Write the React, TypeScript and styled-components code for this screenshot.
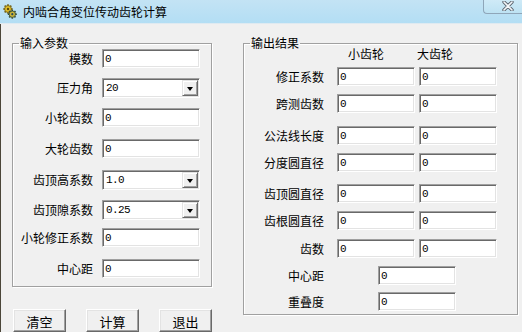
import React from 'react'
import styled, { createGlobalStyle } from 'styled-components'

const GlobalStyle = createGlobalStyle`
  html, body {
    margin: 0;
    padding: 0;
    background: #f0f0f0;
  }
  body {
    font-family: "Noto Sans CJK SC", "Liberation Sans", sans-serif;
    font-size: 12px;
    color: #000;
  }
`

const Window = styled.div`
  width: 522px;
  height: 332px;
  overflow: hidden;
  background: #f0f0f0;
`

const TitleBar = styled.div`
  height: 23px;
  display: flex;
  align-items: flex-start;
  background: linear-gradient(#c3e3f4, #b3def4);
  border-bottom: 1px solid #dfeaf1;
`

const AppIcon = styled.svg`
  margin: 4px 0 0 3px;
  flex: none;
`

const TitleText = styled.span`
  margin: 4px 0 0 6px;
  font-size: 12px;
  line-height: 15px;
  color: #000;
`

const CloseButton = styled.div`
  margin-left: auto;
  width: 39px;
  height: 14px;
  border-left: 1px solid #8fa6b9;
  border-bottom: 1px solid #8fa6b9;
  border-bottom-left-radius: 4px;
  background: linear-gradient(#cfeaf7, #bde2f3);
  display: flex;
  align-items: flex-start;
  padding: 1px 0 0 18px;
  box-sizing: border-box;
`

const Body = styled.div`
  display: flex;
  align-items: flex-start;
  padding: 13px 0 0 11px;
  border-left: 1px solid #4b4639;
  height: 308px;
  box-sizing: border-box;
`

const LeftColumn = styled.div`
  width: 200px;
  display: flex;
  flex-direction: column;
`

const Group = styled.fieldset<{ $width: number; $bottom: number }>`
  width: ${p => p.$width}px;
  box-sizing: border-box;
  margin: 0;
  padding: 0 0 ${p => p.$bottom}px 0;
  border: 1px solid #a0a0a0;
  box-shadow: 1px 1px 0 #fff, inset 1px 1px 0 #fff;
  min-width: 0;
`

const Legend = styled.legend`
  margin-left: 6px;
  padding: 0 1px;
  font-size: 12px;
  line-height: 12px;
`

const Row = styled.div<{ $cols: string; $mt: number; $gap?: number }>`
  display: grid;
  grid-template-columns: ${p => p.$cols};
  column-gap: ${p => p.$gap ?? 9}px;
  align-items: center;
  margin-top: ${p => p.$mt}px;
`

const Label = styled.span`
  text-align: right;
  white-space: nowrap;
  font-size: 12px;
  line-height: 14px;
`

const Header = styled.span<{ $pad: number }>`
  padding-left: ${p => p.$pad}px;
  font-size: 12px;
  line-height: 14px;
`

const sunken = `
  box-sizing: border-box;
  border: 1px solid;
  border-color: #a0a0a0 #fff #fff #a0a0a0;
  box-shadow: inset 1px 1px 0 #696969, inset -1px -1px 0 #e3e3e3;
  background: #fff;
`

const TextBox = styled.input<{ $shift?: number }>`
  ${sunken}
  width: 100%;
  height: 19px;
  margin: 0 0 0 ${p => p.$shift ?? 0}px;
  padding: 0 0 0 2px;
  font-family: "Liberation Mono", monospace;
  font-size: 11px;
  letter-spacing: -0.6px;
  color: #000;
  outline: none;
`

const Combo = styled.div`
  ${sunken}
  height: 20px;
  display: flex;
  align-items: center;
  padding: 2px 2px 2px 3px;
  font-family: "Liberation Mono", monospace;
  font-size: 11px;
  letter-spacing: -0.6px;
`

const ComboText = styled.span`
  flex: 1;
`

const DropButton = styled.div`
  width: 16px;
  height: 16px;
  box-sizing: border-box;
  border: 1px solid;
  border-color: #e3e3e3 #696969 #696969 #e3e3e3;
  box-shadow: inset 1px 1px 0 #fff, inset -1px -1px 0 #a0a0a0;
  background: #f0f0f0;
  display: flex;
  justify-content: center;
  align-items: center;
  margin-right: -1px;
`

const Arrow = styled.div`
  width: 0;
  height: 0;
  border-left: 3.5px solid transparent;
  border-right: 3.5px solid transparent;
  border-top: 4px solid #000;
  margin-top: 1px;
`

const ButtonRow = styled.div`
  display: flex;
  gap: 20px;
  margin-top: 22px;
  padding-left: 1px;
`

const PushButton = styled.button`
  width: 55px;
  height: 23px;
  box-sizing: border-box;
  border: 1px solid;
  border-color: #fff #696969 #696969 #fff;
  box-shadow: inset -1px -1px 0 #a0a0a0, inset 1px 1px 0 #e3e3e3;
  background: #f0f0f0;
  font-family: "Noto Sans CJK SC", sans-serif;
  font-size: 13px;
  line-height: 15px;
  padding: 2px 0 0;
  color: #000;
`

const RightGroupWrap = styled.div`
  margin-left: 31px;
`

function Field({ value, shift }: { value: string; shift?: number }) {
  return <TextBox readOnly value={value} $shift={shift} />
}

function Select({ value }: { value: string }) {
  return (
    <Combo>
      <ComboText>{value}</ComboText>
      <DropButton>
        <Arrow />
      </DropButton>
    </Combo>
  )
}

const inputs: { label: string; value: string; combo?: boolean; mt: number }[] = [
  { label: '模数', value: '0', mt: 0 },
  { label: '压力角', value: '20', combo: true, mt: 10 },
  { label: '小轮齿数', value: '0', mt: 10 },
  { label: '大轮齿数', value: '0', mt: 12 },
  { label: '齿顶高系数', value: '1.0', combo: true, mt: 12 },
  { label: '齿顶隙系数', value: '0.25', combo: true, mt: 10 },
  { label: '小轮修正系数', value: '0', mt: 8 },
  { label: '中心距', value: '0', mt: 12 },
]

const outputs: { label: string; mt: number }[] = [
  { label: '修正系数', mt: 6 },
  { label: '跨测齿数', mt: 8 },
  { label: '公法线长度', mt: 13 },
  { label: '分度圆直径', mt: 8 },
  { label: '齿顶圆直径', mt: 12 },
  { label: '齿根圆直径', mt: 8 },
  { label: '齿数', mt: 9 },
]

function GearIcon() {
  const teeth = (cx: number, cy: number, r: number, n: number) =>
    Array.from({ length: n }, (_, i) => {
      const a = (i / n) * Math.PI * 2
      return (
        <line
          key={i}
          x1={cx + Math.cos(a) * (r - 1)}
          y1={cy + Math.sin(a) * (r - 1)}
          x2={cx + Math.cos(a) * (r + 1.3)}
          y2={cy + Math.sin(a) * (r + 1.3)}
          strokeWidth={1.6}
        />
      )
    })
  return (
    <AppIcon width="14" height="15" viewBox="0 0 14 15">
      <g stroke="#6b5a12">{teeth(5, 5, 3.4, 8)}</g>
      <circle cx="5" cy="5" r="3.4" fill="#e2c02a" stroke="#6b5a12" strokeWidth="0.8" />
      <circle cx="5" cy="5" r="1.2" fill="#5c4a10" />
      <g stroke="#2f4a3a">{teeth(9.3, 10.2, 3.2, 8)}</g>
      <circle cx="9.3" cy="10.2" r="3.2" fill="#c9b43a" stroke="#2f4a3a" strokeWidth="0.8" />
      <circle cx="9.3" cy="10.2" r="1.1" fill="#2a4a5a" />
    </AppIcon>
  )
}

export default function App() {
  return (
    <>
      <GlobalStyle />
      <Window>
        <TitleBar>
          <GearIcon />
          <TitleText>内啮合角变位传动齿轮计算</TitleText>
          <CloseButton>
            <svg width="12" height="10" viewBox="0 0 12 10">
              <path d="M2 1 L10 9 M10 1 L2 9" stroke="#5d6670" strokeWidth="3.4" strokeLinecap="round" />
              <path d="M2 1 L10 9 M10 1 L2 9" stroke="#f4f7fa" strokeWidth="1.6" strokeLinecap="round" />
            </svg>
          </CloseButton>
        </TitleBar>
        <Body>
          <LeftColumn>
            <Group $width={200} $bottom={8}>
              <Legend>输入参数</Legend>
              {inputs.map(r => (
                <Row key={r.label} $cols="80px 98px" $mt={r.mt}>
                  <Label>{r.label}</Label>
                  {r.combo ? <Select value={r.value} /> : <Field value={r.value} />}
                </Row>
              ))}
            </Group>
            <ButtonRow>
              <PushButton>清空</PushButton>
              <PushButton>计算</PushButton>
              <PushButton>退出</PushButton>
            </ButtonRow>
          </LeftColumn>
          <RightGroupWrap>
            <Group $width={275} $bottom={3}>
              <Legend>输出结果</Legend>
              <Row $cols="80px 78px 78px" $mt={-2} $gap={0}>
                <span />
                <Header $pad={24}>小齿轮</Header>
                <Header $pad={15}>大齿轮</Header>
              </Row>
              {outputs.map(r => (
                <Row key={r.label} $cols="80px 78px 78px" $mt={r.mt}>
                  <Label>{r.label}</Label>
                  <Field value="0" shift={4} />
                  <Field value="0" shift={-1} />
                </Row>
              ))}
              <Row $cols="80px 78px" $mt={8} $gap={54}>
                <Label>中心距</Label>
                <Field value="0" />
              </Row>
              <Row $cols="80px 78px" $mt={7} $gap={54}>
                <Label>重叠度</Label>
                <Field value="0" />
              </Row>
            </Group>
          </RightGroupWrap>
        </Body>
      </Window>
    </>
  )
}
